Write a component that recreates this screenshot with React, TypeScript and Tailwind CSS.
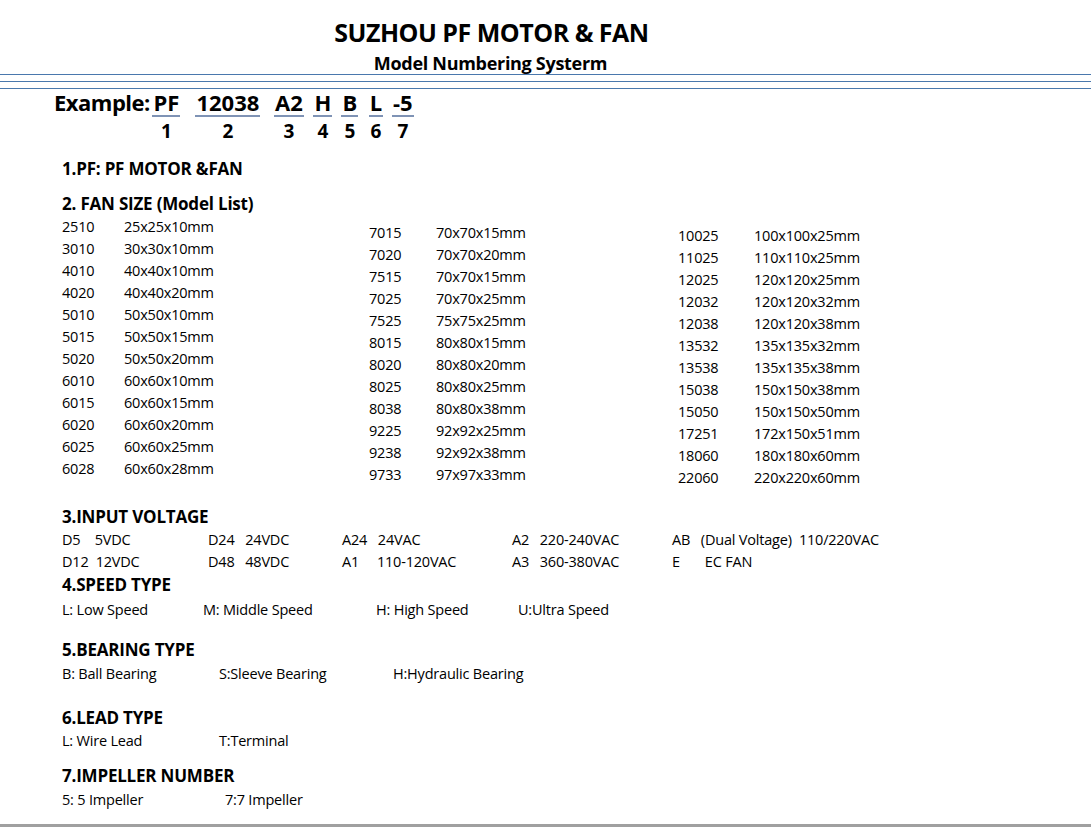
import React from "react";

const c1 = [["2510","25x25x10mm"],["3010","30x30x10mm"],["4010","40x40x10mm"],["4020","40x40x20mm"],["5010","50x50x10mm"],["5015","50x50x15mm"],["5020","50x50x20mm"],["6010","60x60x10mm"],["6015","60x60x15mm"],["6020","60x60x20mm"],["6025","60x60x25mm"],["6028","60x60x28mm"]];
const c2 = [["7015","70x70x15mm"],["7020","70x70x20mm"],["7515","70x70x15mm"],["7025","70x70x25mm"],["7525","75x75x25mm"],["8015","80x80x15mm"],["8020","80x80x20mm"],["8025","80x80x25mm"],["8038","80x80x38mm"],["9225","92x92x25mm"],["9238","92x92x38mm"],["9733","97x97x33mm"]];
const c3 = [["10025","100x100x25mm"],["11025","110x110x25mm"],["12025","120x120x25mm"],["12032","120x120x32mm"],["12038","120x120x38mm"],["13532","135x135x32mm"],["13538","135x135x38mm"],["15038","150x150x38mm"],["15050","150x150x50mm"],["17251","172x150x51mm"],["18060","180x180x60mm"],["22060","220x220x60mm"]];

function Col({ rows, w, pt, codeW }: { rows: string[][]; w: string; pt: string; codeW: string }) {
  return (
    <div className={`${w} ${pt} flex flex-col`}>
      {rows.map(([a, b]) => (
        <div key={a} className="flex h-[22px] items-center">
          <span className={codeW}>{a}</span>
          <span>{b}</span>
        </div>
      ))}
    </div>
  );
}

const Seg = ({ t, w, n }: { t: string; w: string; n: string }) => (
  <div className={`${w} flex flex-col items-center`}>
    <span className="border-b-2 border-[#7f93b5] leading-[26px] px-[1px]">{t}</span>
    <span className="text-[19px] leading-[28px]">{n}</span>
  </div>
);

export default function App() {
  return (
    <div className="w-[1091px] h-[827px] bg-white text-black relative overflow-hidden" style={{ fontFamily: '"Open Sans", sans-serif' }}>
      <div className="pt-[14px] text-center">
        <div className="text-[25px] font-bold leading-[36px] tracking-[-0.5px] pl-[0px]" style={{ marginLeft: -108 }}>SUZHOU PF MOTOR &amp; FAN</div>
        <div className="text-[18px] font-bold leading-[26px] tracking-[-0.3px]" style={{ marginLeft: -110 }}>Model Numbering Systerm</div>
      </div>
      <div className="mt-[-2px] flex flex-col gap-[6px]">
        <div className="h-[1px] bg-[#4a78ad]" />
        <div className="h-[1px] bg-[#4a78ad]" />
        <div className="h-[1px] bg-[#4a78ad]" />
      </div>
      <div className="flex pl-[54px] mt-[0px] text-[22px] font-bold">
        <span className="leading-[26px] tracking-[-0.5px]">Example:</span>
        <Seg t="PF" w="w-[33px]" n="1" />
        <div className="w-[10px]" />
        <Seg t="12038" w="w-[70px]" n="2" />
        <div className="w-[8px]" />
        <Seg t="A2" w="w-[36px]" n="3" />
        <div className="w-[4px]" />
        <Seg t="H" w="w-[24px]" n="4" />
        <div className="w-[4px]" />
        <Seg t="B" w="w-[22px]" n="5" />
        <div className="w-[6px]" />
        <Seg t="L" w="w-[18px]" n="6" />
        <div className="w-[6px]" />
        <Seg t="-5" w="w-[24px]" n="7" />
      </div>
      <div className="pl-[62px] text-[14.5px] leading-[22px] tracking-[-0.2px]">
        <div className="mt-[12px] text-[17px] font-bold leading-[24px]">1.PF: PF MOTOR &amp;FAN</div>
        <div className="mt-[11px] text-[17px] font-bold leading-[24px]">2. FAN SIZE (Model List)</div>
        <div className="flex">
          <Col rows={c1} w="w-[307px]" pt="pt-0" codeW="w-[62px]" />
          <Col rows={c2} w="w-[309px]" pt="pt-[6px]" codeW="w-[67px]" />
          <Col rows={c3} w="w-[300px]" pt="pt-[9px]" codeW="w-[76px]" />
        </div>
        <div className="mt-[16px] text-[17px] font-bold leading-[24px]">3.INPUT VOLTAGE</div>
        <div className="grid grid-cols-[146px_134px_170px_160px_300px]">
          <span>D5&nbsp;&nbsp;&nbsp;&nbsp;5VDC</span><span>D24&nbsp;&nbsp;&nbsp;24VDC</span><span>A24&nbsp;&nbsp;&nbsp;24VAC</span><span>A2&nbsp;&nbsp;&nbsp;220-240VAC</span><span>AB&nbsp;&nbsp;&nbsp;(Dual Voltage)&nbsp;&nbsp;110/220VAC</span>
          <span>D12&nbsp;&nbsp;12VDC</span><span>D48&nbsp;&nbsp;&nbsp;48VDC</span><span>A1&nbsp;&nbsp;&nbsp;&nbsp;&nbsp;110-120VAC</span><span>A3&nbsp;&nbsp;&nbsp;360-380VAC</span><span>E&nbsp;&nbsp;&nbsp;&nbsp;&nbsp;&nbsp;&nbsp;EC FAN</span>
        </div>
        <div className="text-[17px] font-bold leading-[24px]">4.SPEED TYPE</div>
        <div className="flex mt-[2px]"><span className="w-[141px]">L: Low Speed</span><span className="w-[173px]">M: Middle Speed</span><span className="w-[142px]">H: High Speed</span><span>U:Ultra Speed</span></div>
        <div className="mt-[17px] text-[17px] font-bold leading-[24px]">5.BEARING TYPE</div>
        <div className="flex mt-[1px]"><span className="w-[157px]">B: Ball Bearing</span><span className="w-[174px]">S:Sleeve Bearing</span><span>H:Hydraulic Bearing</span></div>
        <div className="mt-[21px] text-[17px] font-bold leading-[24px]">6.LEAD TYPE</div>
        <div className="flex"><span className="w-[157px]">L: Wire Lead</span><span>T:Terminal</span></div>
        <div className="mt-[12px] text-[17px] font-bold leading-[24px]">7.IMPELLER NUMBER</div>
        <div className="flex mt-[1px]"><span className="w-[163px]">5: 5 Impeller</span><span>7:7 Impeller</span></div>
      </div>
      <div className="absolute left-0 right-0 bottom-0 h-[3px] bg-[#a0a0a0]" />
    </div>
  );
}
